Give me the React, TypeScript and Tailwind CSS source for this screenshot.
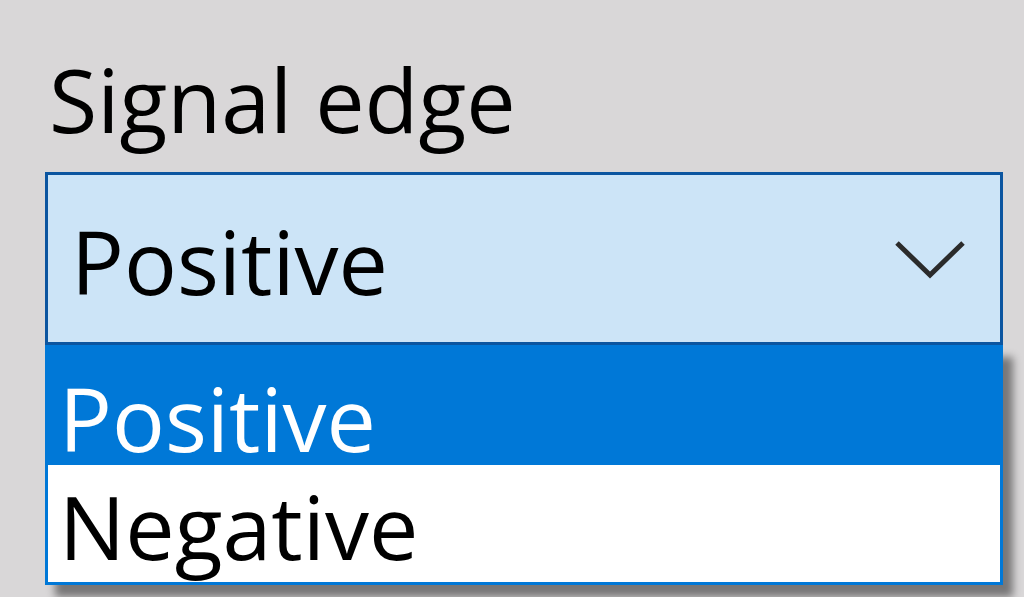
import React from 'react';

const font = { fontFamily: '"Open Sans", "Noto Sans", sans-serif' };

function Chevron() {
  return (
    <svg width="72" height="40" viewBox="0 0 72 40" fill="none">
      <path d="M3 4 L36 36 L69 4" stroke="#2b2b2b" strokeWidth="5" strokeLinejoin="miter" />
    </svg>
  );
}

export default function App() {
  const options = ['Positive', 'Negative'];
  const selected = 'Positive';

  return (
    <div
      className="w-[1024px] h-[597px] overflow-hidden bg-[#d9d7d8] text-black"
      style={font}
    >
      <div className="pt-[55px] pl-[49px] text-[88px] leading-[88px] h-[172px]">Signal edge</div>

      <div className="ml-[45px] w-[958px]">
        {/* Closed combobox */}
        <div className="h-[173px] border-[3px] border-[#0b55a0] bg-[#cce4f7] flex items-center justify-between pl-[23px] pr-[34px]">
          <span className="text-[88px] leading-[88px] pt-[5px]">{selected}</span>
          <Chevron />
        </div>

        {/* Open list */}
        <div className="border-x-[3px] border-b-[3px] border-[#0078d7] bg-white shadow-[10px_12px_8px_rgba(0,0,0,0.45)]">
          {options.map((o) =>
            o === selected ? (
              <div key={o} className="h-[120px] bg-[#0078d7] text-white pt-[29px] pl-[11px] text-[88px] leading-[88px]">
                {o}
              </div>
            ) : (
              <div key={o} className="h-[117px] pt-[17px] pl-[11px] text-[88px] leading-[88px]">
                {o}
              </div>
            )
          )}
        </div>
      </div>
    </div>
  );
}
